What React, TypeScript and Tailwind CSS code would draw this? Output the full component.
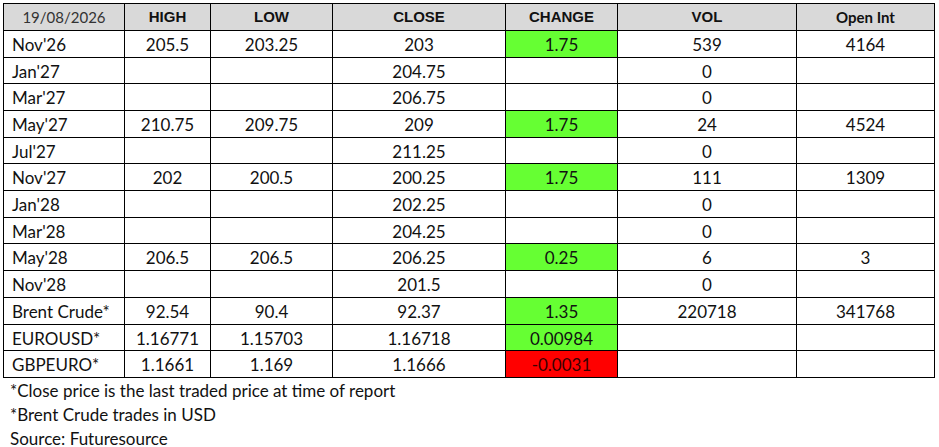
import React from "react";

type Row = {
  name: string;
  high: string;
  low: string;
  close: string;
  change: string;
  chg?: "g" | "r";
  vol: string;
  oi: string;
  h: string;
};

const rows: Row[] = [
  { name: "Nov'26", high: "205.5", low: "203.25", close: "203", change: "1.75", chg: "g", vol: "539", oi: "4164", h: "h-[27px]" },
  { name: "Jan'27", high: "", low: "", close: "204.75", change: "", vol: "0", oi: "", h: "h-[26px]" },
  { name: "Mar'27", high: "", low: "", close: "206.75", change: "", vol: "0", oi: "", h: "h-[27px]" },
  { name: "May'27", high: "210.75", low: "209.75", close: "209", change: "1.75", chg: "g", vol: "24", oi: "4524", h: "h-[27px]" },
  { name: "Jul'27", high: "", low: "", close: "211.25", change: "", vol: "0", oi: "", h: "h-[26px]" },
  { name: "Nov'27", high: "202", low: "200.5", close: "200.25", change: "1.75", chg: "g", vol: "111", oi: "1309", h: "h-[27px]" },
  { name: "Jan'28", high: "", low: "", close: "202.25", change: "", vol: "0", oi: "", h: "h-[27px]" },
  { name: "Mar'28", high: "", low: "", close: "204.25", change: "", vol: "0", oi: "", h: "h-[26px]" },
  { name: "May'28", high: "206.5", low: "206.5", close: "206.25", change: "0.25", chg: "g", vol: "6", oi: "3", h: "h-[27px]" },
  { name: "Nov'28", high: "", low: "", close: "201.5", change: "", vol: "0", oi: "", h: "h-[27px]" },
  { name: "Brent Crude*", high: "92.54", low: "90.4", close: "92.37", change: "1.35", chg: "g", vol: "220718", oi: "341768", h: "h-[27px]" },
  { name: "EUROUSD*", high: "1.16771", low: "1.15703", close: "1.16718", change: "0.00984", chg: "g", vol: "", oi: "", h: "h-[26px]" },
  { name: "GBPEURO*", high: "1.1661", low: "1.169", close: "1.1666", change: "-0.0031", chg: "r", vol: "", oi: "", h: "h-[27px]" },
];

const cell = "border-r border-b border-black flex items-center justify-center";

export default function App() {
  return (
    <div className="w-[939px] h-[447px] bg-white text-[#111] font-['Lato','Open_Sans',sans-serif]">
      <div className="pt-[3px] pl-[3px]">
        <div className="grid grid-cols-[122px_86px_122px_173px_112px_179px_138px] w-[932px] border-black">
          <div className={`${cell} border-l border-t h-[28px] bg-[#d9d9d9] text-[15px] text-[#333]`}>19/08/2026</div>
          {["HIGH", "LOW", "CLOSE", "CHANGE", "VOL"].map((t) => (
            <div key={t} className={`${cell} border-t h-[28px] bg-[#d9d9d9] text-[15px] font-bold font-['Liberation_Sans',Arial,sans-serif]`}>
              {t}
            </div>
          ))}
          <div className={`${cell} border-t h-[28px] bg-[#d9d9d9] text-[15px] font-bold`}>Open Int</div>
          {rows.map((r) => (
            <React.Fragment key={r.name}>
              <div className={`border-l border-r border-b border-black flex items-center ${r.h} pl-[8px] pt-[2px] text-[17px]`}>{r.name}</div>
              <div className={`${cell} ${r.h} pt-[2px] text-[17px]`}>{r.high}</div>
              <div className={`${cell} ${r.h} pt-[2px] text-[17px]`}>{r.low}</div>
              <div className={`${cell} ${r.h} pt-[2px] text-[17px]`}>{r.close}</div>
              <div
                className={`${cell} ${r.h} pt-[2px] text-[17px] ${
                  r.chg === "g" ? "bg-[#66ff33]" : r.chg === "r" ? "bg-[#ff0000] text-[#3a0000]" : ""
                }`}
              >
                {r.change}
              </div>
              <div className={`${cell} ${r.h} pt-[2px] text-[17px]`}>{r.vol}</div>
              <div className={`${cell} ${r.h} pt-[2px] text-[17px]`}>{r.oi}</div>
            </React.Fragment>
          ))}
        </div>
        <div className="pl-[7px] text-[17px] pt-[1px]">
          <div className="leading-[24px]">*Close price is the last traded price at time of report</div>
          <div className="leading-[24px]">*Brent Crude trades in USD</div>
          <div className="leading-[16px] pt-[4px]">Source: Futuresource</div>
        </div>
      </div>
    </div>
  );
}
